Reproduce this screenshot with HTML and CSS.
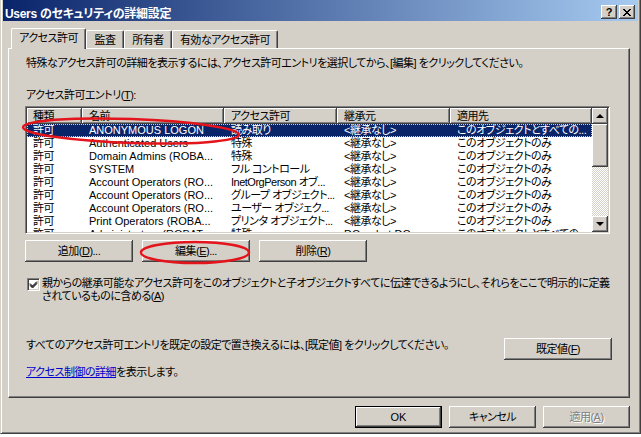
FILE: index.html
```html
<!DOCTYPE html>
<html lang="ja">
<head>
  <meta charset="UTF-8">
  <title>Users のセキュリティの詳細設定</title>
  <link rel="stylesheet" href="styles.css">
</head>
<body>
  <div class="window">
    <div class="titlebar">
      <span class="title">Users のセキュリティの詳細設定</span>
      <div class="caption-btns">
        <span class="cbtn help">?</span>
        <span class="cbtn close">
          <svg width="8" height="7" viewBox="0 0 8 7"><path d="M0 0L7 7M1 0L8 7M7 0L0 7M8 0L1 7" stroke="#000" stroke-width="1"/></svg>
        </span>
      </div>
    </div>

    <div class="content">
      <div class="tabs">
        <div class="tab active" style="width:75px">アクセス許可</div>
        <div class="tab" style="width:38px">監査</div>
        <div class="tab" style="width:48px">所有者</div>
        <div class="tab" style="width:106px">有効なアクセス許可</div>
      </div>

      <div class="panel">
        <div class="desc">特殊なアクセス許可の詳細を表示するには、アクセス許可エントリを選択してから、[編集] をクリックしてください。</div>
        <div class="label">アクセス許可エントリ(<u>T</u>):</div>

        <div class="list">
          <div class="cols">
            <div class="hrow">
              <span class="hcell">種類</span>
              <span class="hcell">名前</span>
              <span class="hcell">アクセス許可</span>
              <span class="hcell">継承元</span>
              <span class="hcell">適用先</span>
            </div>
            <div class="row sel">
              <span>許可</span><span class="lat">ANONYMOUS LOGON</span><span>読み取り</span><span>&lt;継承なし&gt;</span><span>このオブジェクトとすべての...</span>
            </div>
            <div class="row">
              <span>許可</span><span class="lat">Authenticated Users</span><span>特殊</span><span>&lt;継承なし&gt;</span><span>このオブジェクトのみ</span>
            </div>
            <div class="row">
              <span>許可</span><span class="lat">Domain Admins (ROBA...</span><span>特殊</span><span>&lt;継承なし&gt;</span><span>このオブジェクトのみ</span>
            </div>
            <div class="row">
              <span>許可</span><span class="lat">SYSTEM</span><span>フル コントロール</span><span>&lt;継承なし&gt;</span><span>このオブジェクトのみ</span>
            </div>
            <div class="row">
              <span>許可</span><span class="lat">Account Operators (RO...</span><span>InetOrgPerson オブ...</span><span>&lt;継承なし&gt;</span><span>このオブジェクトのみ</span>
            </div>
            <div class="row">
              <span>許可</span><span class="lat">Account Operators (RO...</span><span>グループ オブジェクト...</span><span>&lt;継承なし&gt;</span><span>このオブジェクトのみ</span>
            </div>
            <div class="row">
              <span>許可</span><span class="lat">Account Operators (RO...</span><span>ユーザー オブジェク...</span><span>&lt;継承なし&gt;</span><span>このオブジェクトのみ</span>
            </div>
            <div class="row">
              <span>許可</span><span class="lat">Print Operators (ROBA...</span><span>プリンタ オブジェクト...</span><span>&lt;継承なし&gt;</span><span>このオブジェクトのみ</span>
            </div>
            <div class="row">
              <span>許可</span><span class="lat">Administrators (ROBAT...</span><span>特殊</span><span class="lat">DC=robat,DC=...</span><span>このオブジェクトとすべての...</span>
            </div>
          </div>
          <div class="vscroll">
            <div class="sb-btn"><i class="arrow up"></i></div>
            <div class="thumb"></div>
            <div class="track"></div>
            <div class="sb-btn"><i class="arrow down"></i></div>
          </div>
        </div>

        <div class="btnrow">
          <button class="btn wide">追加(<u>D</u>)...</button>
          <button class="btn wide">編集(<u>E</u>)...</button>
          <button class="btn wide">削除(<u>R</u>)</button>
        </div>

        <div class="check">
          <span class="box">
            <svg width="9" height="9" viewBox="0 0 9 9"><path d="M1 3.5L3.5 6L8 1.5M1 4.5L3.5 7L8 2.5M1 5.5L3.5 8L8 3.5" stroke="#000" stroke-width="1" fill="none"/></svg>
          </span>
          <span class="check-text">親からの継承可能なアクセス許可をこのオブジェクトと子オブジェクトすべてに伝達できるようにし、それらをここで明示的に定義<br>されているものに含める(<u>A</u>)</span>
        </div>

        <div class="defaults">
          <span>すべてのアクセス許可エントリを既定の設定で置き換えるには、[既定値] をクリックしてください。</span>
          <button class="btn wide">既定値(<u>F</u>)</button>
        </div>

        <div class="more"><a href="#">アクセス制御の詳細</a>を表示します。</div>
      </div>

      <div class="footer">
        <button class="btn default lat">OK</button>
        <button class="btn">キャンセル</button>
        <button class="btn disabled">適用(<u>A</u>)</button>
      </div>
    </div>

    <svg class="marks" width="641" height="434" viewBox="0 0 641 434">
      <ellipse cx="131" cy="131" rx="108" ry="12" transform="rotate(2 131 131)" fill="none" stroke="#e3141b" stroke-width="2.5"/>
      <ellipse cx="195" cy="252.5" rx="54" ry="10.5" fill="none" stroke="#e3141b" stroke-width="2.5"/>
    </svg>
  </div>
</body>
</html>
```

FILE: styles.css
```css
* {
  box-sizing: border-box;
}
body {
  margin: 0;
  background: #fff;
  font-family: "Liberation Sans", "Noto Sans CJK JP", sans-serif;
  font-size: 11px;
  letter-spacing: -0.5px;
  font-feature-settings: "palt" 1;
  color: #000;
}
.lat {
  letter-spacing: 0;
}
.window {
  position: relative;
  width: 641px;
  height: 434px;
  background: #d4d0c8;
  border-left: 1px solid #d4d0c8;
  border-right: 1px solid #404040;
  border-bottom: 1px solid #404040;
  padding: 0 2px 2px;
  box-shadow: inset 1px 0 #fff, inset -1px -1px #808080;
}
.titlebar {
  height: 21px;
  padding: 3px 3px 0 2px;
  display: flex;
  align-items: center;
  justify-content: space-between;
  background: linear-gradient(to right, #0a246a, #a6caf0);
}
.title {
  color: #fff;
  font-weight: bold;
  font-size: 12px;
  letter-spacing: -0.3px;
}
.caption-btns {
  display: flex;
  gap: 2px;
}
.cbtn {
  width: 16px;
  height: 14px;
  display: flex;
  align-items: center;
  justify-content: center;
  background: #d4d0c8;
  box-shadow: inset -1px -1px #404040, inset 1px 1px #fff, inset -2px -2px #808080;
  font-weight: bold;
  font-size: 11px;
  line-height: 14px;
  letter-spacing: 0;
}
.content {
  padding: 7px 8px 0 5px;
}
.tabs {
  display: flex;
  align-items: flex-end;
  height: 20px;
  padding-left: 3px;
  position: relative;
  z-index: 1;
}
.tab {
  height: 18px;
  padding-top: 2px;
  line-height: 14px;
  text-align: center;
  white-space: nowrap;
  border-top: 1px solid #fff;
  border-left: 1px solid #fff;
  border-right: 1px solid #404040;
  border-radius: 2px 2px 0 0;
  box-shadow: inset -1px 0 #808080;
}
.tab.active {
  height: 21px;
  margin-bottom: -1px;
  padding-top: 2px;
  background: #d4d0c8;
}
.panel {
  height: 350px;
  padding: 0 17px;
  border: 1px solid;
  border-color: #fff #404040 #404040 #fff;
  box-shadow: inset -1px -1px #808080;
}
.desc {
  margin-top: 7px;
  line-height: 14px;
  white-space: nowrap;
}
.label {
  margin-top: 18px;
  line-height: 14px;
}
.list {
  display: flex;
  width: 585px;
  height: 128px;
  margin: 4px 0 0 -1px;
  padding: 1px;
  background: #fff;
  border: 1px solid;
  border-color: #808080 #fff #fff #808080;
  box-shadow: inset 1px 1px #404040, inset -1px -1px #d4d0c8;
  overflow: hidden;
}
.cols {
  width: 565px;
  overflow: hidden;
}
.hrow,
.row {
  display: grid;
  grid-template-columns: 55px 142px 113px 113px 142px;
}
.hcell {
  height: 16px;
  padding-left: 6px;
  line-height: 16px;
  white-space: nowrap;
  overflow: hidden;
  background: #d4d0c8;
  box-shadow: inset -1px -1px #404040, inset 1px 1px #fff, inset -2px -2px #808080;
}
.hcell + .hcell {
  padding-left: 7px;
}
.row {
  height: 13px;
  line-height: 13px;
}
.row span {
  padding-left: 7px;
  white-space: nowrap;
  overflow: hidden;
}
.row span:first-child {
  padding-left: 6px;
}
.row.sel {
  background: #0a246a;
  color: #fff;
  outline: 1px dotted #d4d0c8;
  outline-offset: -1px;
}
.vscroll {
  width: 16px;
  display: flex;
  flex-direction: column;
}
.sb-btn,
.thumb {
  background: #d4d0c8;
  box-shadow: inset -1px -1px #404040, inset 1px 1px #fff, inset -2px -2px #808080;
}
.sb-btn {
  height: 16px;
  display: flex;
  align-items: center;
  justify-content: center;
}
.thumb {
  height: 43px;
}
.track {
  flex: 1;
  background-color: #d4d0c8;
  background-image: conic-gradient(#fff 25%, #d4d0c8 0 50%, #fff 0 75%, #d4d0c8 0);
  background-size: 2px 2px;
}
.arrow {
  width: 0;
  height: 0;
  border-left: 4px solid transparent;
  border-right: 4px solid transparent;
}
.arrow.up {
  border-bottom: 4px solid #000;
}
.arrow.down {
  border-top: 4px solid #000;
}
.btn {
  width: 87px;
  height: 22px;
  padding: 0;
  border: none;
  background: #d4d0c8;
  box-shadow: inset -1px -1px #404040, inset 1px 1px #fff, inset -2px -2px #808080;
  font: inherit;
  letter-spacing: inherit;
  color: #000;
  line-height: 20px;
}
.btn.lat {
  letter-spacing: 0;
}
.btn.wide {
  width: 108px;
}
.btn.default {
  border: 1px solid #000;
}
.btn.disabled {
  color: #808080;
  text-shadow: 1px 1px #fff;
}
.btnrow {
  display: flex;
  gap: 9px;
  margin: 6px 0 0 -1px;
}
.check {
  display: flex;
  gap: 2px;
  margin-top: 15px;
  padding-left: 1px;
}
.box {
  width: 13px;
  height: 13px;
  flex: none;
  margin-top: 1px;
  display: flex;
  align-items: center;
  justify-content: center;
  background: #fff;
  border: 1px solid;
  border-color: #808080 #fff #fff #808080;
  box-shadow: inset 1px 1px #404040, inset -1px -1px #d4d0c8;
}
.check-text {
  line-height: 13px;
  white-space: nowrap;
}
.defaults {
  display: flex;
  justify-content: space-between;
  align-items: flex-start;
  margin-top: 35px;
  line-height: 14px;
  white-space: nowrap;
}
.more {
  margin-top: 5px;
  line-height: 14px;
}
.more a {
  color: #0000cc;
}
.footer {
  display: flex;
  justify-content: flex-end;
  gap: 7px;
  margin-top: 8px;
}
.marks {
  position: absolute;
  left: -1px;
  top: 0;
  pointer-events: none;
}
```
